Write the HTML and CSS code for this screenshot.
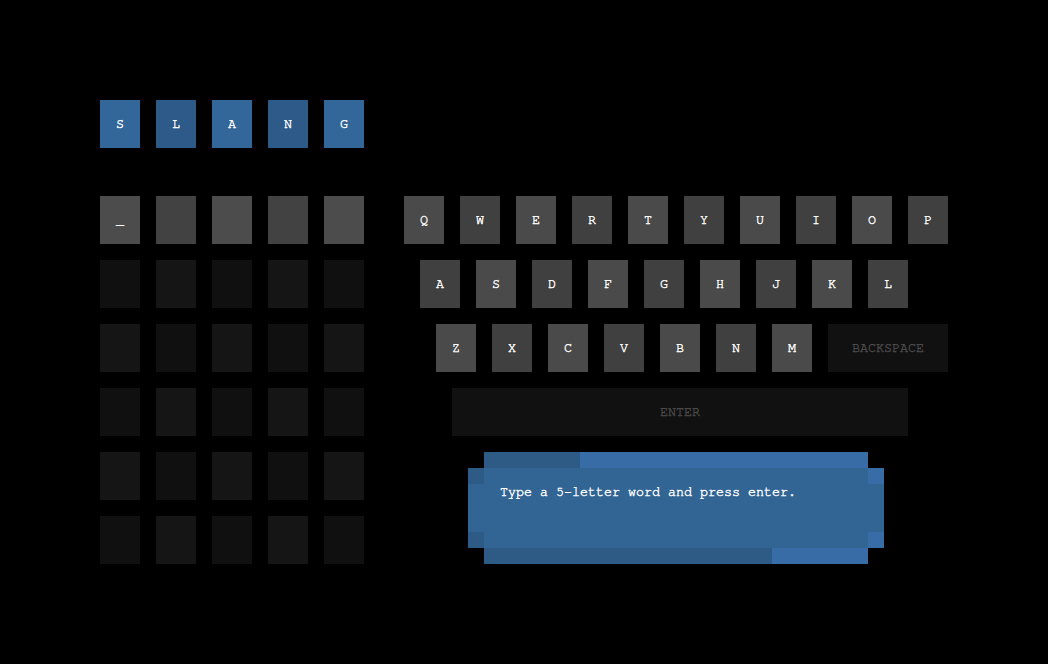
FILE: index.html
```html
<!DOCTYPE html>
<html>
<head>
<meta charset="utf-8">
<link rel="stylesheet" href="styles.css">
</head>
<body>
<div class="page">
  <div class="row">
    <div class="tile ans a">S</div>
    <div class="tile ans b">L</div>
    <div class="tile ans a">A</div>
    <div class="tile ans b">N</div>
    <div class="tile ans a">G</div>
  </div>
  <div class="main">
    <div class="grid">
      <div class="row">
        <div class="tile cur l">_</div><div class="tile cur d"></div><div class="tile cur l"></div><div class="tile cur d"></div><div class="tile cur l"></div>
      </div>
      <div class="row">
        <div class="tile e d"></div><div class="tile e l"></div><div class="tile e d"></div><div class="tile e l"></div><div class="tile e d"></div>
      </div>
      <div class="row">
        <div class="tile e l"></div><div class="tile e d"></div><div class="tile e l"></div><div class="tile e d"></div><div class="tile e l"></div>
      </div>
      <div class="row">
        <div class="tile e d"></div><div class="tile e l"></div><div class="tile e d"></div><div class="tile e l"></div><div class="tile e d"></div>
      </div>
      <div class="row">
        <div class="tile e l"></div><div class="tile e d"></div><div class="tile e l"></div><div class="tile e d"></div><div class="tile e l"></div>
      </div>
      <div class="row">
        <div class="tile e d"></div><div class="tile e l"></div><div class="tile e d"></div><div class="tile e l"></div><div class="tile e d"></div>
      </div>
    </div>
    <div class="kb">
      <div class="row">
        <div class="tile key l">Q</div><div class="tile key d">W</div><div class="tile key l">E</div><div class="tile key d">R</div><div class="tile key l">T</div><div class="tile key d">Y</div><div class="tile key l">U</div><div class="tile key d">I</div><div class="tile key l">O</div><div class="tile key d">P</div>
      </div>
      <div class="row r2">
        <div class="tile key d">A</div><div class="tile key l">S</div><div class="tile key d">D</div><div class="tile key l">F</div><div class="tile key d">G</div><div class="tile key l">H</div><div class="tile key d">J</div><div class="tile key l">K</div><div class="tile key d">L</div>
      </div>
      <div class="row r3">
        <div class="tile key l">Z</div><div class="tile key d">X</div><div class="tile key l">C</div><div class="tile key d">V</div><div class="tile key l">B</div><div class="tile key d">N</div><div class="tile key l">M</div><div class="tile wide back">BACKSPACE</div>
      </div>
      <div class="row r4">
        <div class="tile wide enter">ENTER</div>
      </div>
      <div class="msg">
        <div class="msg-top"></div>
        <div class="msg-body">Type a 5-letter word and press enter.</div>
        <div class="msg-bot"></div>
      </div>
    </div>
  </div>
</div>
</body>
</html>
```
FILE: styles.css
```css
html, body {
  margin: 0;
  padding: 0;
  background: #000;
}
body {
  font-family: "Nimbus Mono PS", "Nimbus Mono L", "FreeMono", "Courier 10 Pitch", Courier, "Liberation Mono", monospace;
  font-size: 13.33px;
  color: #ffffff;
  -webkit-text-stroke: 0.4px currentColor;
}
.page {
  padding: 100px 0 0 100px;
  display: flex;
  flex-direction: column;
  gap: 48px;
}
.row {
  display: flex;
  gap: 16px;
}
.tile {
  width: 40px;
  height: 48px;
  display: flex;
  align-items: center;
  justify-content: center;
  flex: none;
}
.ans.a { background: #336699; }
.ans.b { background: #2d5a88; }
.cur.l { background: #4c4c4c; }
.cur.d { background: #424242; }
.e.l { background: #151515; }
.e.d { background: #101010; }
.key.l { background: #4a4a4a; }
.key.d { background: #404040; }
.main {
  display: flex;
  gap: 40px;
}
.grid, .kb {
  display: flex;
  flex-direction: column;
  gap: 16px;
}
.r2 { padding-left: 16px; }
.r3 { padding-left: 32px; }
.r4 { padding-left: 48px; }
.wide {
  background: #111111;
  color: #4a4a4a;
}
.back { width: 120px; }
.enter { width: 456px; }
.msg {
  margin-left: 64px;
  width: 416px;
  display: flex;
  flex-direction: column;
}
.msg-top, .msg-bot {
  height: 16px;
  margin: 0 16px;
}
.msg-top {
  background: linear-gradient(to right, #2e5a86 96px, #386ca6 96px);
}
.msg-bot {
  background: linear-gradient(to right, #2e5a86 288px, #386ca6 288px);
}
.msg-body {
  height: 80px;
  box-sizing: border-box;
  padding: 16px 32px 0 32px;
  line-height: 16px;
  background:
    linear-gradient(#2e5a86, #2e5a86) left top / 16px 16px no-repeat,
    linear-gradient(#2e5a86, #2e5a86) left bottom / 16px 16px no-repeat,
    linear-gradient(#386ca6, #386ca6) right top / 16px 16px no-repeat,
    linear-gradient(#386ca6, #386ca6) right bottom / 16px 16px no-repeat,
    #336594;
}
```
